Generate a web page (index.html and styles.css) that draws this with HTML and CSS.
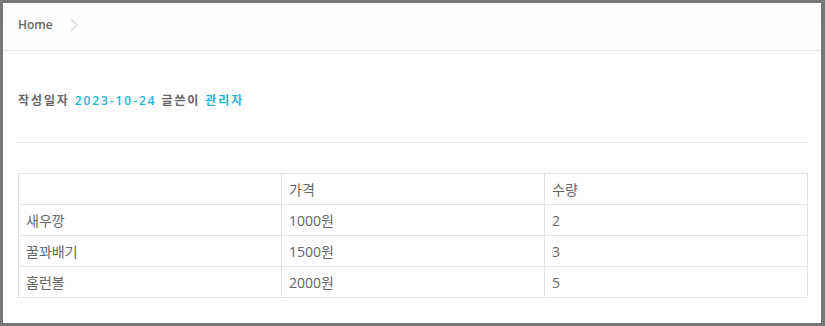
FILE: index.html
```html
<!DOCTYPE html>
<html lang="ko">
<head>
<meta charset="utf-8">
<link rel="stylesheet" href="styles.css">
</head>
<body>
<div class="frame">
  <div class="breadcrumb">
    <span class="crumb">Home</span>
    <svg class="chev" width="8" height="14" viewBox="0 0 8 14"><path d="M1 1 L7 7 L1 13" fill="none" stroke="#d6d6d6" stroke-width="1.2"/></svg>
  </div>
  <div class="content">
    <div class="meta">
      <span class="label">작성일자</span>
      <span class="hl">2023-10-24</span>
      <span class="label">글쓴이</span>
      <span class="hl">관리자</span>
    </div>
    <hr class="divider">
    <table class="grid">
      <thead>
        <tr><th></th><th>가격</th><th>수량</th></tr>
      </thead>
      <tbody>
        <tr><td>새우깡</td><td>1000원</td><td>2</td></tr>
        <tr><td>꿀꽈배기</td><td>1500원</td><td>3</td></tr>
        <tr><td>홈런볼</td><td>2000원</td><td>5</td></tr>
      </tbody>
    </table>
  </div>
</div>
</body>
</html>
```
FILE: styles.css
```css
html, body {
  margin: 0;
  padding: 0;
  background: #777;
}
body {
  padding: 3px 4px 3px 3px;
  height: 326px;
  box-sizing: border-box;
  font-family: "Open Sans", "Noto Sans CJK KR", sans-serif;
}
.frame {
  background: #fff;
  height: 320px;
  overflow: hidden;
}
.breadcrumb {
  height: 47px;
  border-bottom: 1px solid #e6e6e6;
  display: flex;
  align-items: center;
  padding-left: 15px;
  gap: 17px;
  background: linear-gradient(#fcfcfc, #fff);
}
.crumb {
  font-size: 12px;
  color: #666;
  font-weight: 600;
  position: relative;
  top: -2px;
}
.chev {
  position: relative;
  top: -2px;
}
.content {
  padding: 0 13px 0 15px;
}
.meta {
  padding-top: 41px;
  font-size: 12px;
  font-weight: 600;
  letter-spacing: 1.9px;
  color: #666;
  line-height: 18px;
}
.meta .hl {
  color: #29b3d3;
}
.divider {
  margin: 32px 0 0;
  border: 0;
  border-top: 1px solid #e6e6e6;
}
.grid {
  margin-top: 30px;
  width: 100%;
  border-collapse: collapse;
  table-layout: fixed;
  font-size: 14px;
  color: #666;
}
.grid th, .grid td {
  border: 1px solid #e3e3e3;
  height: 30px;
  padding: 0 7px;
  text-align: left;
  font-weight: 400;
  vertical-align: middle;
}
```
